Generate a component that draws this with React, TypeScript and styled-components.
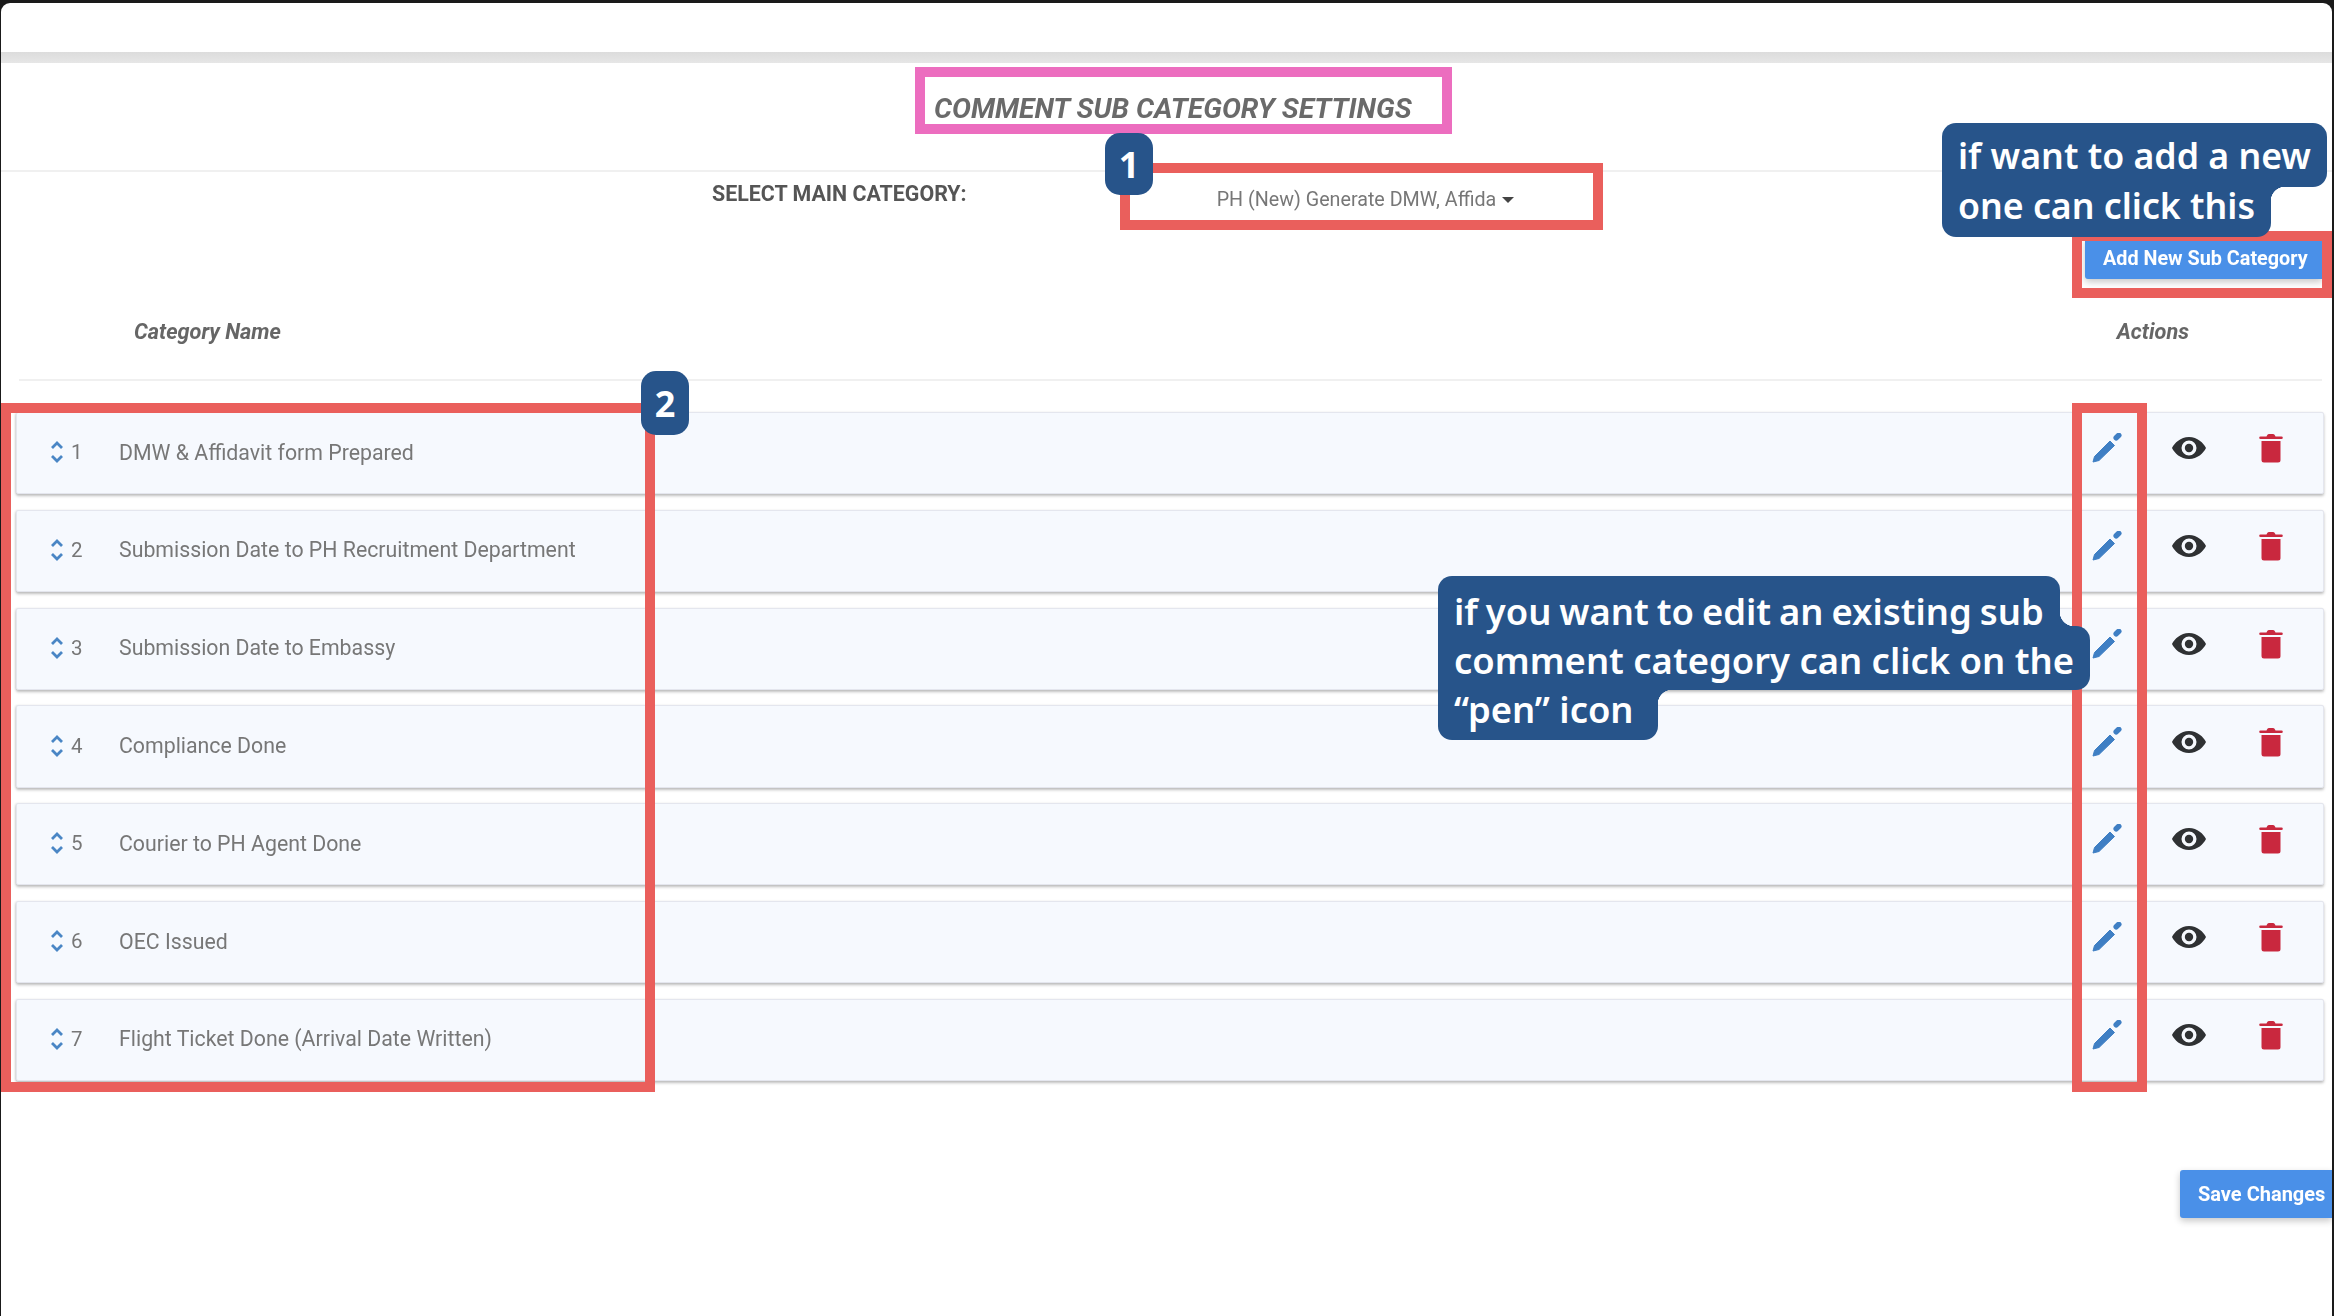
import React from "react";
import styled, { createGlobalStyle } from "styled-components";

const Global = createGlobalStyle`
  html, body { margin: 0; padding: 0; background: #1a1a1a; }
  body { width: 2334px; height: 1316px; overflow: hidden; font-family: Roboto, "Liberation Sans", sans-serif; }
`;

const Screen = styled.div`
  width: 2334px;
  height: 1316px;
  box-sizing: border-box;
  padding: 3px 2px 2px 1px;
  background: #1a1a1a;
  position: relative;
  filter: blur(0.5px);
`;

const Window = styled.main`
  height: 100%;
  background: #fff;
  border-radius: 9px;
  overflow: hidden;
  display: flex;
  flex-direction: column;
  padding-top: 49px;
`;

const GrayBar = styled.div`
  height: 11px;
  flex: none;
  background: linear-gradient(#dcdcdc, #e6e6e6);
`;

const TitleRow = styled.header`
  height: 108.5px;
  flex: none;
  box-sizing: border-box;
  border-bottom: 2px solid #f0f0f0;
  padding: 30px 0 0 933px;
`;

const Title = styled.h1`
  margin: 0;
  font-size: 28.3px;
  line-height: 32px;
  font-weight: 700;
  font-style: italic;
  color: #6a6a6a;
  white-space: nowrap;
`;

const SelectRow = styled.section`
  height: 70.5px;
  flex: none;
  box-sizing: border-box;
  display: flex;
  align-items: flex-start;
  padding: 9px 0 0 711px;
`;

const SelectLabel = styled.label`
  font-size: 21.4px;
  line-height: 26px;
  font-weight: 700;
  color: #555;
  white-space: nowrap;
`;

const Dropdown = styled.div`
  display: flex;
  align-items: center;
  margin: 6px 0 0 250px;
  font-size: 19.7px;
  line-height: 26px;
  color: #777;
  white-space: nowrap;
`;

const Caret = styled.span`
  width: 0;
  height: 0;
  margin-left: 6px;
  border-left: 6px solid transparent;
  border-right: 6px solid transparent;
  border-top: 6px solid #444;
`;

const ButtonRow = styled.div`
  flex: none;
  height: 0;
  display: flex;
  justify-content: flex-end;
  padding-right: 10px;
`;

const PrimaryButton = styled.button<{ $flush?: boolean }>`
  flex: none;
  border: 0;
  box-sizing: border-box;
  background: #4a90e8;
  color: #fff;
  font-family: Roboto, "Liberation Sans", sans-serif;
  font-weight: 700;
  box-shadow: 0 3px 7px rgba(0, 0, 0, 0.22);
  white-space: nowrap;
  text-align: left;
  padding: 0 0 0 18px;
  border-radius: 3px 0 0 3px;
  ${(p) =>
    p.$flush
      ? `width: 152px; height: 48px; font-size: 20px;`
      : `width: 237px; height: 41px; font-size: 19.8px; margin-top: -4.5px;`}
`;

const HeaderRow = styled.div`
  height: 139px;
  flex: none;
  box-sizing: border-box;
  margin: 0 10px 0 18px;
  border-bottom: 2px solid #f0f0f0;
  display: flex;
  justify-content: space-between;
  padding: 78px 133px 0 115px;
`;

const HeaderCell = styled.span`
  font-size: 21.7px;
  line-height: 24px;
  font-weight: 700;
  font-style: italic;
  color: #666;
`;

const List = styled.ul`
  list-style: none;
  margin: 31px 8px 0 15px;
  padding: 0;
  display: flex;
  flex-direction: column;
  gap: 15.5px;
`;

const Row = styled.li`
  height: 82.3px;
  box-sizing: border-box;
  display: flex;
  align-items: center;
  background: #f6f9fe;
  border: 1px solid #e4e6ee;
  border-radius: 2px;
  box-shadow: 0 2px 3px rgba(0, 0, 0, 0.25), -1px 0 2px rgba(0, 0, 0, 0.08);
  padding: 0 0 2px 33px;
`;

const Sorter = styled.svg`
  width: 14px;
  height: 24px;
  flex: none;
`;

const Index = styled.span`
  width: 55px;
  padding-left: 7px;
  box-sizing: border-box;
  flex: none;
  font-size: 20.5px;
  color: #777;
`;

const Name = styled.span`
  flex: 1;
  font-size: 21.3px;
  color: #777;
  white-space: nowrap;
`;

const Actions = styled.div`
  display: flex;
  align-items: center;
  flex: none;
  margin-bottom: 8px;
  padding-right: 37px;
`;

const IconSlot = styled.span<{ $wide?: boolean }>`
  width: ${(p) => (p.$wide ? 134 : 30)}px;
  display: flex;
  justify-content: center;
`;

const Spacer = styled.div`
  flex: 1;
`;

const FooterRow = styled.footer`
  flex: none;
  display: flex;
  justify-content: flex-end;
  padding-bottom: 145px;
`;

/* Annotations that lie over the page */
const Outline = styled.div<{ $x: number; $y: number; $w: number; $h: number; $pink?: boolean }>`
  position: absolute;
  box-sizing: border-box;
  left: ${(p) => p.$x}px;
  top: ${(p) => p.$y}px;
  width: ${(p) => p.$w}px;
  height: ${(p) => p.$h}px;
  border: 10px solid ${(p) => (p.$pink ? "#ec6dbf" : "#ea5f5c")};
  pointer-events: none;
`;

const Badge = styled.div<{ $x: number; $y: number; $h: number }>`
  position: absolute;
  left: ${(p) => p.$x}px;
  top: ${(p) => p.$y}px;
  width: 48px;
  height: ${(p) => p.$h}px;
  border-radius: 15px;
  background: #27548a;
  color: #fff;
  display: flex;
  align-items: center;
  justify-content: center;
  font-family: "Noto Sans", sans-serif;
  font-weight: 700;
  font-size: 36px;
`;

const Callout = styled.div<{ $x: number; $y: number; $size: number }>`
  position: absolute;
  left: ${(p) => p.$x}px;
  top: ${(p) => p.$y}px;
  display: flex;
  flex-direction: column;
  align-items: flex-start;
  font-family: "Noto Sans", sans-serif;
  font-weight: 600;
  font-size: ${(p) => p.$size}px;
  line-height: 50px;
  color: #fff;
  white-space: nowrap;
`;

const CalloutLine = styled.div<{
  $top?: number;
  $bottom?: number;
  $overlap?: number;
  $layer: number;
  $end?: number;
  $wordGap?: number;
  $corners: string;
}>`
  position: relative;
  z-index: ${(p) => p.$layer};
  background: #27548a;
  padding: ${(p) => p.$top ?? 0}px ${(p) => p.$end ?? 16}px ${(p) => p.$bottom ?? 0}px 16px;
  margin-top: ${(p) => -(p.$overlap ?? 0)}px;
  word-spacing: ${(p) => p.$wordGap ?? 0}px;
  border-radius: ${(p) => p.$corners};
`;

const NotchBelow = styled.span<{ $offset: number }>`
  position: absolute;
  right: -14px;
  bottom: ${(p) => p.$offset}px;
  width: 14px;
  height: 14px;
  background: radial-gradient(circle at 100% 0, transparent 14px, #27548a 14.5px);
`;

const NotchAbove = styled.span<{ $offset: number }>`
  position: absolute;
  right: -14px;
  top: ${(p) => p.$offset}px;
  width: 14px;
  height: 14px;
  background: radial-gradient(circle at 100% 100%, transparent 14px, #27548a 14.5px);
`;

const Pen = () => (
  <svg width="30" height="30" viewBox="0 0 30 30" aria-hidden>
    <path d="M1 29 L2.500 23.500 L18 8 L22.500 12.500 L7 27.500 Z" fill="#3f7fc4" strokeLinejoin="round" stroke="#3f7fc4" />
    <path d="M24.200 4.800 L26.800 2.300" stroke="#3f7fc4" strokeWidth="5.500" strokeLinecap="round" fill="none" />
  </svg>
);

const Eye = () => (
  <svg width="36" height="24" viewBox="0 0 36 24" aria-hidden>
    <path
      fillRule="evenodd"
      fill="#2f3133"
      d="M18 1C9.500 1 3.500 7 1 12c2.500 5 8.500 11 17 11s14.500-6 17-11C32.500 7 26.500 1 18 1Zm0 3.500a7.500 7.500 0 1 1 0 15 7.500 7.500 0 0 1 0-15Z"
    />
    <circle cx="18" cy="12" r="4.200" fill="#2f3133" />
  </svg>
);

const Trash = () => (
  <svg width="24" height="30" viewBox="0 0 24 30" aria-hidden>
    <path d="M8 2.500 a2 2 0 0 1 2-1.500h4a2 2 0 0 1 2 1.500L16.500 3.500H22.500a1 1 0 0 1 0 2.600H1.500a1 1 0 0 1 0-2.600H7.500Z" fill="#c9283e" />
    <path d="M2.500 8h19v19a2.500 2.500 0 0 1-2.500 2.500H5A2.500 2.500 0 0 1 2.500 27Z" fill="#c9283e" />
  </svg>
);

const rows = [
  "DMW & Affidavit form Prepared",
  "Submission Date to PH Recruitment Department",
  "Submission Date to Embassy",
  "Compliance Done",
  "Courier to PH Agent Done",
  "OEC Issued",
  "Flight Ticket Done (Arrival Date Written)",
];

export default function App() {
  return (
    <Screen>
      <Global />
      <Window>
        <GrayBar />
        <TitleRow>
          <Title>COMMENT SUB CATEGORY SETTINGS</Title>
        </TitleRow>
        <SelectRow>
          <SelectLabel>SELECT MAIN CATEGORY:</SelectLabel>
          <Dropdown>
            PH (New) Generate DMW, Affida
            <Caret />
          </Dropdown>
        </SelectRow>
        <ButtonRow>
          <PrimaryButton>Add New Sub Category</PrimaryButton>
        </ButtonRow>
        <HeaderRow>
          <HeaderCell>Category Name</HeaderCell>
          <HeaderCell>Actions</HeaderCell>
        </HeaderRow>
        <List>
          {rows.map((name, i) => (
            <Row key={name}>
              <Sorter viewBox="0 0 14 24" aria-hidden>
                <path d="M2 8 L7 3 L12 8" fill="none" stroke="#4a86c5" strokeWidth="2.800" />
                <path d="M2 16 L7 21 L12 16" fill="none" stroke="#4a86c5" strokeWidth="2.800" />
              </Sorter>
              <Index>{i + 1}</Index>
              <Name>{name}</Name>
              <Actions>
                <IconSlot><Pen /></IconSlot>
                <IconSlot $wide><Eye /></IconSlot>
                <IconSlot><Trash /></IconSlot>
              </Actions>
            </Row>
          ))}
        </List>
        <Spacer />
        <FooterRow>
          <PrimaryButton $flush>Save Changes</PrimaryButton>
        </FooterRow>
      </Window>

      <Outline $pink $x={915} $y={67} $w={537} $h={67} />
      <Outline $x={1120} $y={163} $w={483} $h={67} />
      <Outline $x={2072} $y={231} $w={260} $h={67} />
      <Outline $x={1} $y={403} $w={654} $h={689} />
      <Outline $x={2072} $y={403} $w={75} $h={689} />
      <Badge $x={1105} $y={133} $h={62}>1</Badge>
      <Badge $x={641} $y={371} $h={64}>2</Badge>
      <Callout $x={1942} $y={123} $size={35.7}>
        <CalloutLine $layer={2} $top={7} $bottom={7} $corners="14px 14px 14px 0">if want to add a new</CalloutLine>
        <CalloutLine $layer={1} $overlap={7} $bottom={7} $corners="0 0 14px 14px">
          one can click this
          <NotchAbove $offset={7} />
        </CalloutLine>
      </Callout>
      <Callout $x={1438} $y={576} $size={36.4}>
        <CalloutLine $layer={3} $top={10} $wordGap={-1.5} $corners="14px 14px 0 0">
          if you want to edit an existing sub
          <NotchBelow $offset={10} />
        </CalloutLine>
        <CalloutLine $layer={2} $overlap={10} $top={9} $bottom={5} $corners="0 14px 14px 0">
          comment category can click on the
        </CalloutLine>
        <CalloutLine $layer={1} $overlap={6} $bottom={6} $end={24} $corners="0 0 14px 14px">
          “pen” icon
          <NotchAbove $offset={6} />
        </CalloutLine>
      </Callout>
    </Screen>
  );
}
